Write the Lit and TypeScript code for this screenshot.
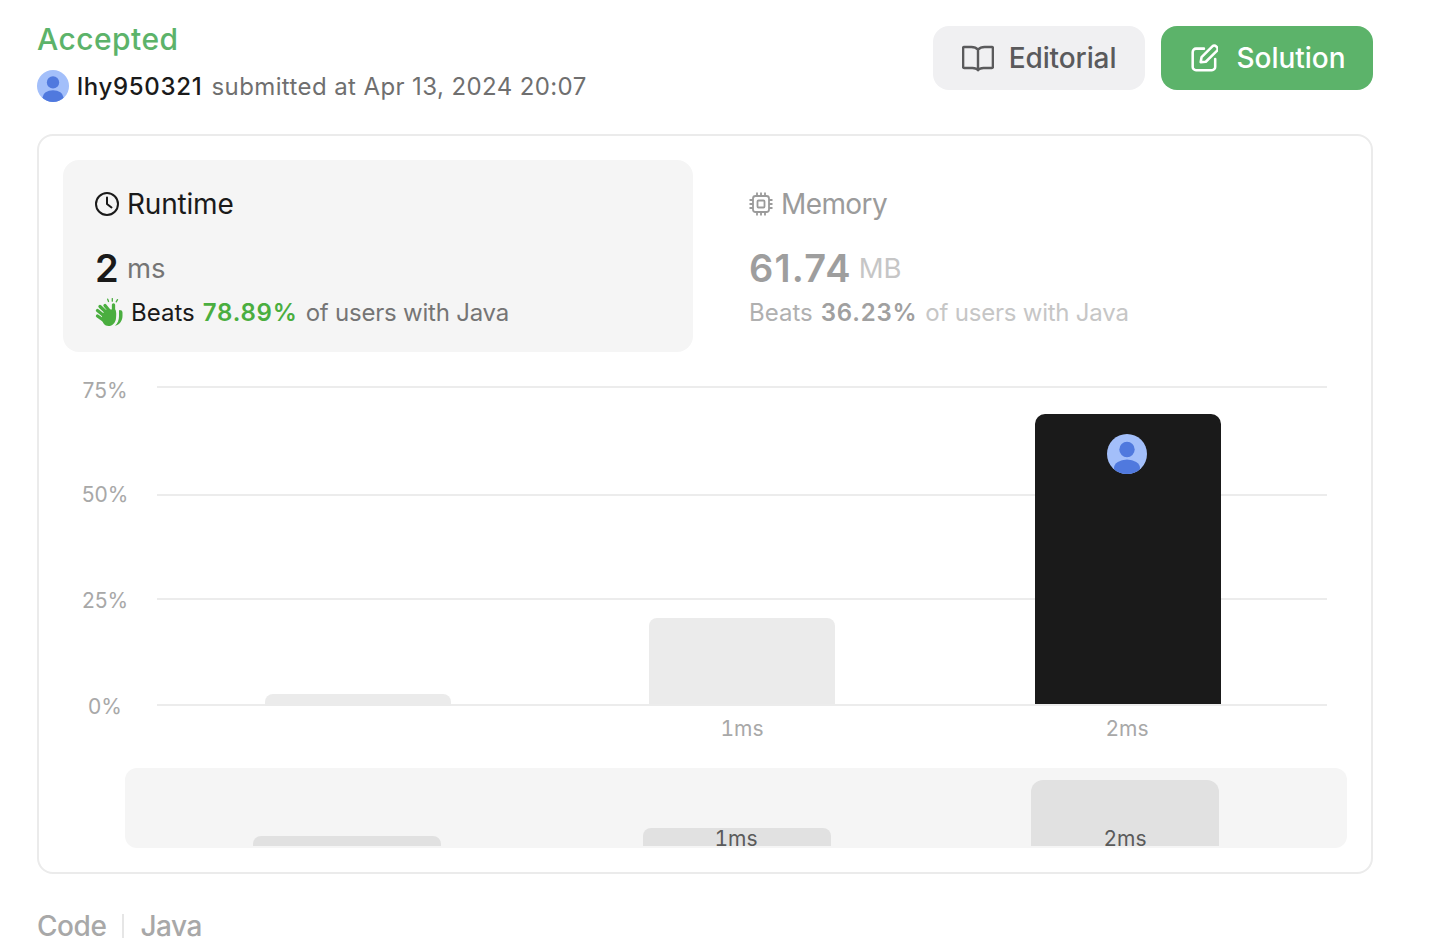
import { LitElement, html, css, svg } from "lit";
import { customElement } from "lit/decorators.js";

const avatarShape = () => svg`
  <defs><clipPath id="avc"><circle cx="20" cy="20" r="20"/></clipPath></defs>
  <g clip-path="url(#avc)">
    <rect width="40" height="40" fill="#a3bffa"/>
    <circle cx="20" cy="15.5" r="7.7" fill="#5079de"/>
    <ellipse cx="20" cy="34" rx="13" ry="8.6" fill="#5079de"/>
  </g>`;
const avatar = (size: number) => html`<svg class="avatar" width=${size} height=${size} viewBox="0 0 40 40">${avatarShape()}</svg>`;

@customElement("app-root")
export class AppRoot extends LitElement {
  static styles = css`
    :host { display: block; width: 1450px; height: 944px; overflow: hidden; background: #fff; font-family: Inter, "Liberation Sans", sans-serif; color: #1a1a1a; box-sizing: border-box; padding: 0 77px 0 37px; }
    * { box-sizing: border-box; }
    .head { display: flex; justify-content: space-between; height: 134px; }
    .title { font-size: 30px; line-height: 36px; font-weight: 500; color: #5cb36a; margin-top: 21px; letter-spacing: 0.45px; }
    .sub { display: flex; align-items: center; margin-top: 13px; height: 32px; font-size: 24px; letter-spacing: 0.4px; color: #6f6f6f; }
    .avatar { display: block; flex: none; }
    .user { color: #1a1a1a; font-weight: 500; margin: 0 9px 0 8px; letter-spacing: 0.7px; }
    .btns { display: flex; gap: 16px; padding-top: 26px; }
    .btn { width: 212px; height: 64px; border-radius: 16px; display: flex; align-items: center; justify-content: center; font-size: 28px; font-weight: 500; }
    .ed { background: #f0f0f2; color: #5a5a5c; gap: 15px; letter-spacing: -0.1px; }
    .sol { background: #5cb36a; color: #fff; gap: 18px; }
    .card { height: 740px; border: 2px solid #ebebeb; border-radius: 16px; padding: 24px; }
    .panels { display: grid; grid-template-columns: 630px 630px; gap: 24px; height: 192px; }
    .panel { border-radius: 16px; padding: 28px 32px 0; }
    .panel.on { background: #f5f5f5; }
    .lbl { display: flex; align-items: center; gap: 8px; height: 32px; font-size: 28px; line-height: 32px; letter-spacing: -0.2px; }
    .val { display: flex; align-items: center; height: 40px; margin-top: 28px; }
    .num { font-size: 38px; font-weight: 600; line-height: 40px; letter-spacing: 1.2px; }
    .unit { font-size: 27.500px; line-height: 40px; color: #757575; margin-left: 7px; }
    .beats { display: flex; align-items: center; height: 32px; margin-top: 8px; font-size: 24px; color: #1a1a1a; }
    .beats b { font-weight: 600; margin: 0 8px; letter-spacing: 0.8px; }
    .beats .pct { color: #4aae3f; }
    .beats .rest { color: #757575; letter-spacing: -0.22px; }
    .clap { margin-right: 8px; flex: none; }
    .off .lbl { color: #9b9b9b; letter-spacing: -0.6px; }
    .off .num { color: #9e9e9e; }
    .off .unit { color: #c6c6c6; }
    .off .beats { color: #b0b0b0; }
    .off .beats b { color: #a0a0a0; }
    .off .beats .rest { color: #c6c6c6; }
    .chart { display: block; overflow: visible; }
    .chart text { font-family: Inter, "Liberation Sans", sans-serif; font-size: 21px; fill: #a8a8a8; }
    .chart text.ms { font-feature-settings: "tnum"; }
    .chart text.dark { fill: #5a5a5a; }
    .code { display: flex; align-items: center; margin-top: 35px; font-size: 28px; line-height: 34px; font-weight: 500; color: #a8a8a8; letter-spacing: -0.45px; }
    .sep { width: 2px; height: 24px; background: #e6e6e6; margin: 0 16px; }
  `;

  render() {
    return html`
      <div class="head">
        <div>
          <div class="title">Accepted</div>
          <div class="sub">${avatar(32)}<span class="user">lhy950321</span><span>submitted at Apr 13, 2024 20:07</span></div>
        </div>
        <div class="btns">
          <div class="btn ed">
            <svg width="32" height="32" viewBox="1.500 1.500 29 29" fill="none" stroke="currentColor" stroke-width="2.200" stroke-linejoin="round"><path d="M16 8.500C14.500 6.800 12.500 6 10 6H3.500a1 1 0 0 0-1 1v17a1 1 0 0 0 1 1H11c2 0 4 .6 5 2 1-1.400 3-2 5-2h7.500a1 1 0 0 0 1-1V7a1 1 0 0 0-1-1H22c-2.500 0-4.500.8-6 2.500zM16 8.500V27"/></svg>
            Editorial
          </div>
          <div class="btn sol">
            <svg width="30" height="30" viewBox="-2 0 32 32" fill="none" stroke="currentColor" stroke-width="2.700" stroke-linecap="round" stroke-linejoin="round"><path d="M15 6H6.500A3.500 3.500 0 0 0 3 9.500v16A3.500 3.500 0 0 0 6.500 29h17a3.500 3.500 0 0 0 3.500-3.500V17"/><path d="M11.500 20.500l1-5.500L24 3.500a2.800 2.800 0 0 1 4 0l.8.8a2.800 2.800 0 0 1 0 4L17 20z"/></svg>
            Solution
          </div>
        </div>
      </div>
      <div class="card">
        <div class="panels">
          <div class="panel on">
            <div class="lbl">
              <svg width="24" height="24" viewBox="0 0 24 24" fill="none" stroke="#1a1a1a" stroke-width="2" stroke-linecap="round" stroke-linejoin="round"><circle cx="12" cy="12" r="11"/><path d="M12 5.500V12l4.500 3.500"/></svg>
              Runtime
            </div>
            <div class="val"><span class="num">2</span><span class="unit">ms</span></div>
            <div class="beats">
              <svg class="clap" width="28" height="28" viewBox="0 0 28 28">
                <g stroke="#4aae3f" stroke-linecap="round" fill="none">
                  <path stroke-width="3.300" d="M2.500 18l7 5M2.500 12.500l8 6.500M5 8.500l7.500 7M10 7.500l4.500 5.500M18.500 6.800V14"/>
                  <path stroke-width="1.300" d="M12.700 1.200l.8 2.300M17.300.6v2.600M22.500 1.600l-1.300 2.200"/>
                </g>
                <path fill="#4aae3f" d="M7 19.500c0-4.500 3.500-8 7-8 2.500 0 4.500-.8 6.500.2 1 2.500.8 5.500.5 8.500-.4 4.500-3.500 7.800-7.500 7.800-3.800 0-6.500-3.500-6.500-8.500z"/>
                <path fill="#4aae3f" d="M24.500 12c1.800 0 3 .8 3 2.500v3.500c0 4.500-2.700 8.800-7.500 9.700 2.800-2.500 4-6 4-9.500v-4c0-1 0-2.200.5-2.200z"/>
              </svg>
              <span>Beats</span><b class="pct">78.89%</b><span class="rest">of users with Java</span>
            </div>
          </div>
          <div class="panel off">
            <div class="lbl">
              <svg width="24" height="24" viewBox="0 0 24 24" fill="none" stroke="#9b9b9b" stroke-width="1.800"><rect x="4" y="4" width="16" height="16" rx="2.500"/><rect x="8.500" y="8.500" width="7" height="7" rx="1"/><path d="M8 0.500V4M12 0.500V4M16 0.500V4M8 20v3.500M12 20v3.500M16 20v3.500M0.500 8H4M0.500 12H4M0.500 16H4M20 8h3.500M20 12h3.500M20 16h3.500"/></svg>
              Memory
            </div>
            <div class="val"><span class="num">61.74</span><span class="unit">MB</span></div>
            <div class="beats"><span>Beats</span><b>36.23%</b><span class="rest">of users with Java</span></div>
          </div>
        </div>
        <svg class="chart" width="1284" height="496" viewBox="63 352 1284 496">
          ${[386, 494, 598, 704].map((y) => svg`<rect x="157" y=${y} width="1170" height="2" fill="#ececec"/>`)}
          ${[["75%", 398], ["50%", 502], ["25%", 608], ["0%", 714]].map(([t, y]) => svg`<text x="105" y=${y} text-anchor="middle">${t}</text>`)}
          <path d="M265 706v-4a8 8 0 0 1 8-8h170a8 8 0 0 1 8 8v4z" fill="#ebebeb"/>
          <path d="M649 704v-78a8 8 0 0 1 8-8h170a8 8 0 0 1 8 8v78z" fill="#ebebeb"/>
          <path d="M1035 704V424a10 10 0 0 1 10-10h166a10 10 0 0 1 10 10v280z" fill="#1a1a1a"/>
          <svg x="1107" y="434" width="40" height="40" viewBox="0 0 40 40">${avatarShape()}</svg>
          <text class="ms" x="742" y="736" text-anchor="middle">1ms</text>
          <text class="ms" x="1127" y="736" text-anchor="middle">2ms</text>
          <path d="M125 780a12 12 0 0 1 12-12h1198a12 12 0 0 1 12 12v56a12 12 0 0 1-12 12H137a12 12 0 0 1-12-12z" fill="#f5f5f5"/>
          <path d="M253 846v-2a8 8 0 0 1 8-8h172a8 8 0 0 1 8 8v2z" fill="#e1e1e1"/>
          <path d="M643 846v-10a8 8 0 0 1 8-8h172a8 8 0 0 1 8 8v10z" fill="#e1e1e1"/>
          <path d="M1031 846v-54a12 12 0 0 1 12-12h164a12 12 0 0 1 12 12v54z" fill="#e1e1e1"/>
          <text class="ms dark" x="736" y="846" text-anchor="middle">1ms</text>
          <text class="ms dark" x="1125" y="846" text-anchor="middle">2ms</text>
        </svg>
      </div>
      <div class="code"><span>Code</span><span class="sep"></span><span>Java</span></div>
    `;
  }
}
